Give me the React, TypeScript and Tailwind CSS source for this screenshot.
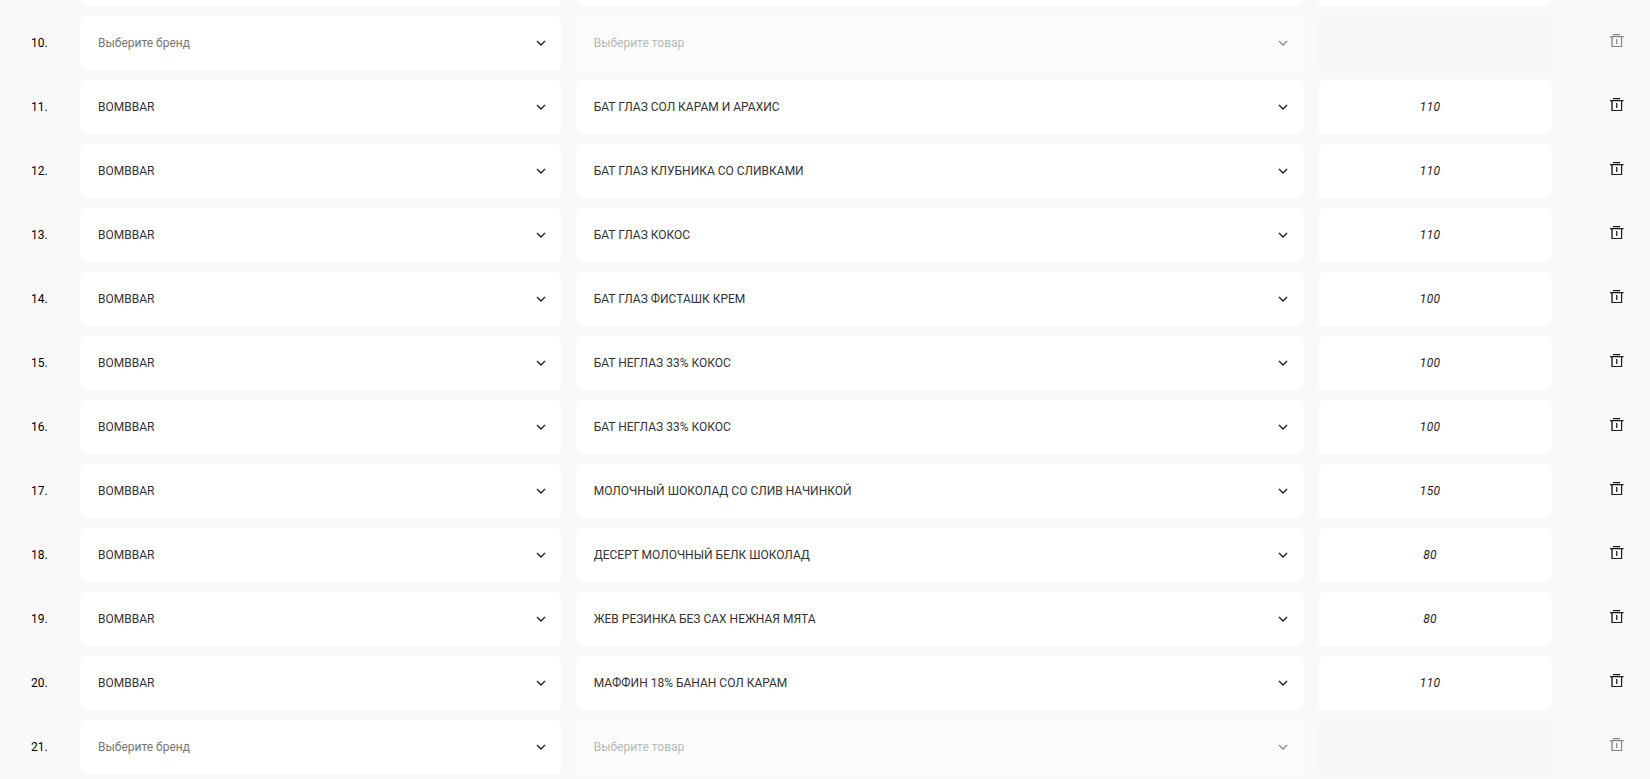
import { useState } from "react";

type Line = { id: number; brand: string; product: string; amount: string };

const initialLines: Line[] = [
  { id: 10, brand: "", product: "", amount: "" },
  { id: 11, brand: "BOMBBAR", product: "БАТ ГЛАЗ СОЛ КАРАМ И АРАХИС", amount: "110" },
  { id: 12, brand: "BOMBBAR", product: "БАТ ГЛАЗ КЛУБНИКА СО СЛИВКАМИ", amount: "110" },
  { id: 13, brand: "BOMBBAR", product: "БАТ ГЛАЗ КОКОС", amount: "110" },
  { id: 14, brand: "BOMBBAR", product: "БАТ ГЛАЗ ФИСТАШК КРЕМ", amount: "100" },
  { id: 15, brand: "BOMBBAR", product: "БАТ НЕГЛАЗ 33% КОКОС", amount: "100" },
  { id: 16, brand: "BOMBBAR", product: "БАТ НЕГЛАЗ 33% КОКОС", amount: "100" },
  { id: 17, brand: "BOMBBAR", product: "МОЛОЧНЫЙ ШОКОЛАД СО СЛИВ НАЧИНКОЙ", amount: "150" },
  { id: 18, brand: "BOMBBAR", product: "ДЕСЕРТ МОЛОЧНЫЙ БЕЛК ШОКОЛАД", amount: "80" },
  { id: 19, brand: "BOMBBAR", product: "ЖЕВ РЕЗИНКА БЕЗ САХ НЕЖНАЯ МЯТА", amount: "80" },
  { id: 20, brand: "BOMBBAR", product: "МАФФИН 18% БАНАН СОЛ КАРАМ", amount: "110" },
  { id: 21, brand: "", product: "", amount: "" },
];

const brands = ["BOMBBAR"];
const products = Array.from(new Set(initialLines.map((l) => l.product).filter(Boolean)));

function Chevron() {
  return (
    <svg
      className="pointer-events-none absolute top-6 right-4 h-[7px] w-[10px]"
      viewBox="0 0 10 7"
      fill="none"
      stroke="#1c1c1e"
      strokeWidth="1.3"
      aria-hidden="true"
    >
      <path d="M1 1 5 5 9 1" />
    </svg>
  );
}

function TrashIcon() {
  return (
    <svg className="h-[14px] w-[14px]" viewBox="0 0 14 14" fill="#1c1c1e" aria-hidden="true">
      <path d="M3 0h7v1.2H3zM0 2h13.6v1.2H0z" />
      <path d="M1.3 3h1.4v9H11V3h1.2v10H1.3z" />
      <path d="M6.1 5h1.3v5H6.1z" />
    </svg>
  );
}

type PickerProps = {
  label: string;
  placeholder: string;
  value: string;
  options: string[];
  disabled?: boolean;
  onChange: (value: string) => void;
};

function Picker({ label, placeholder, value, options, disabled, onChange }: PickerProps) {
  return (
    <div className={disabled ? "relative min-w-0 opacity-50" : "relative min-w-0"}>
      <select
        aria-label={label}
        value={value}
        disabled={disabled}
        onChange={(e) => onChange(e.target.value)}
        className={`block h-[54px] w-full appearance-none rounded-md bg-white pr-10 pl-[18px] text-xs opacity-100 outline-none ${
          value ? "text-[#333333]" : "text-[#757575]"
        }`}
      >
        <option value="">{placeholder}</option>
        {options.map((o) => (
          <option key={o}>{o}</option>
        ))}
      </select>
      <Chevron />
    </div>
  );
}

export default function App() {
  const [lines, setLines] = useState(initialLines);
  const update = (id: number, patch: Partial<Line>) =>
    setLines((all) => all.map((l) => (l.id === id ? { ...l, ...patch } : l)));

  return (
    <main className="min-h-screen bg-[#f9f9f9] font-['Roboto',sans-serif] text-xs text-black">
      <div className="grid grid-cols-[482fr_729fr_234fr] gap-[14px] pr-[98px] pl-20">
        <div className="h-1.5 rounded-b-md bg-white" />
        <div className="h-1.5 rounded-b-md bg-white" />
        <div className="h-1.5 rounded-b-md bg-white" />
      </div>
      <ul className="flex flex-col gap-2.5 pt-2.5">
        {lines.map((line) => {
          const empty = !line.brand;
          return (
            <li key={line.id} className="flex items-center">
              <span className="w-20 shrink-0 pl-[31px]">{line.id}.</span>
              <div className="grid min-w-0 flex-1 grid-cols-[482fr_729fr_234fr] gap-[14px]">
                <Picker
                  label={`Бренд ${line.id}`}
                  placeholder="Выберите бренд"
                  value={line.brand}
                  options={brands}
                  onChange={(brand) => update(line.id, { brand })}
                />
                <Picker
                  label={`Товар ${line.id}`}
                  placeholder="Выберите товар"
                  value={line.product}
                  options={products}
                  disabled={empty}
                  onChange={(product) => update(line.id, { product })}
                />
                <input
                  aria-label={`Количество ${line.id}`}
                  inputMode="numeric"
                  value={line.amount}
                  disabled={empty}
                  onChange={(e) => update(line.id, { amount: e.target.value })}
                  className="h-[54px] w-full min-w-0 rounded-md bg-white pr-[26px] pl-4 text-center tracking-wide text-[#1c1c1e] italic outline-none disabled:bg-[#f6f6f6]"
                />
              </div>
              <div className="w-[98px] shrink-0 pb-1 pl-[58px]">
                <button
                  type="button"
                  aria-label={`Удалить ${line.id}`}
                  disabled={empty}
                  onClick={() => setLines((all) => all.filter((l) => l.id !== line.id))}
                  className="block disabled:opacity-50"
                >
                  <TrashIcon />
                </button>
              </div>
            </li>
          );
        })}
      </ul>
    </main>
  );
}
